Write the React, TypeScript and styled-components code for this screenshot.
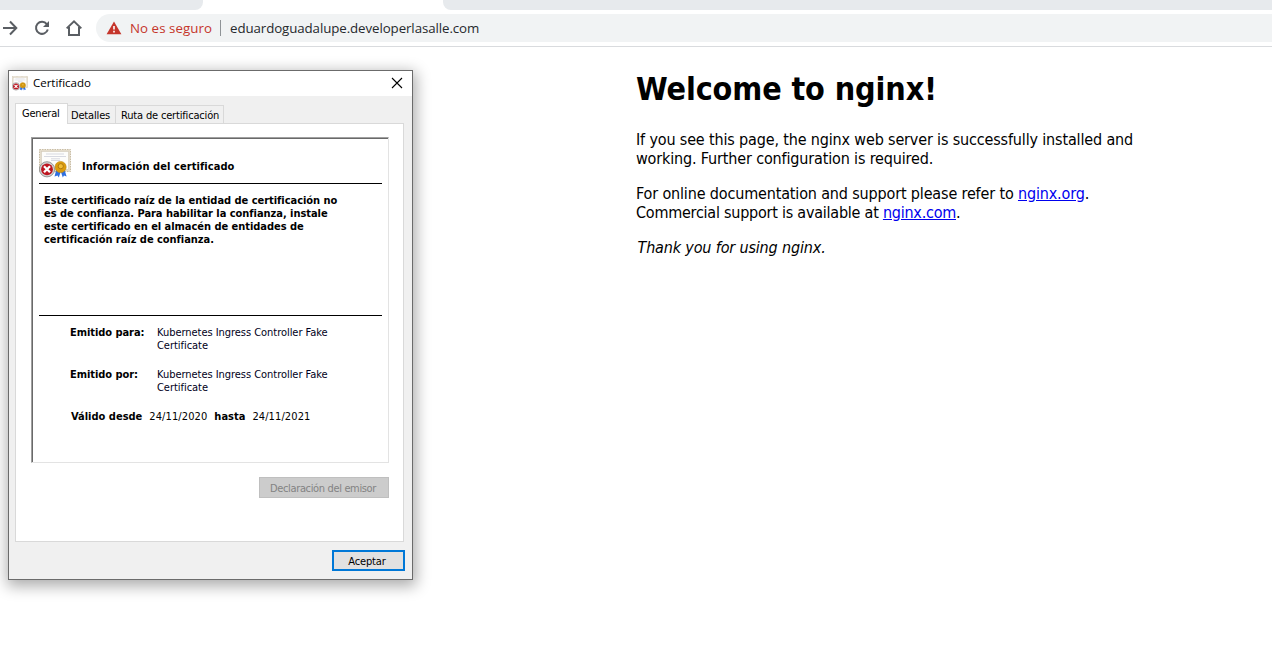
import React from "react";
import styled, { createGlobalStyle } from "styled-components";

const tahoma = `"DejaVu Sans Condensed", "DejaVu Sans", sans-serif`;
const segoe = `"Open Sans", "Noto Sans", sans-serif`;

const GlobalStyle = createGlobalStyle`
  * { box-sizing: border-box; }
  body { margin: 0; background: #fff; color: #000; font-family: ${tahoma}; overflow: hidden; }
`;

const Screen = styled.div`
  position: relative;
  width: 1272px;
  height: 650px;
  overflow: hidden;
  background: #fff;
`;

/* Browser chrome */
const TabStrip = styled.div`
  display: flex;
  justify-content: space-between;
  height: 10px;
`;
const BackgroundTab = styled.div<{ $width: number; $side: "left" | "right" }>`
  width: ${(p) => p.$width}px;
  background: #e7eaed;
  border-radius: ${(p) => (p.$side === "left" ? "0 0 8px 0" : "0 0 0 8px")};
`;
const Toolbar = styled.div`
  display: flex;
  align-items: center;
  height: 37px;
  padding-bottom: 1px;
  border-bottom: 1px solid #d9dbde;
`;
const NavIcons = styled.div`
  display: flex;
  width: 96px;
  height: 28px;
`;
const NavIcon = styled.svg`
  flex: none;
  width: 32px;
  height: 28px;
  fill: none;
  stroke: #5a5e63;
  stroke-width: 2;
  &:first-child { width: 26px; }
`;
const Omnibox = styled.div`
  display: flex;
  align-items: center;
  flex: 1;
  height: 28px;
  padding-left: 10px;
  border-radius: 14px 0 0 14px;
  background: #f1f3f4;
  font: 13.3px/28px ${segoe};
`;
const WarningIcon = styled.svg`
  width: 16px;
  height: 14px;
  margin-right: 8px;
`;
const Insecure = styled.span`
  width: 90px;
  color: #c5352b;
  letter-spacing: 0.05px;
  white-space: nowrap;
`;
const Divider = styled.span`
  width: 1px;
  height: 16px;
  margin-right: 9px;
  background: #8f9397;
`;
const Address = styled.span`
  color: #26292d;
  letter-spacing: -0.09px;
  white-space: nowrap;
`;

/* Web page */
const Page = styled.main`
  margin-left: 636px;
  width: 560px;
  padding-top: 23px;
  font-size: 16px;
  line-height: 19px;
  letter-spacing: -0.155px;
  white-space: nowrap;
`;
const Title = styled.h1`
  margin: 0 0 21px;
  font-size: 32px;
  line-height: 39px;
  letter-spacing: -0.12px;
`;
const Paragraph = styled.p`
  margin: 0 0 16px;
`;
const Tight = styled.span`
  letter-spacing: -0.235px;
`;
const Thanks = styled.em`
  margin-left: 1.5px;
`;
const Link = styled.a`
  color: #0000ee;
  text-decoration: underline;
`;

/* Certificate window */
const Dialog = styled.section`
  position: absolute;
  left: 8px;
  top: 70px;
  width: 405px;
  height: 510px;
  border: 1px solid #6b6b6b;
  background: #f0f0f0;
  box-shadow: 1px 4px 14px 2px rgba(0, 0, 0, 0.33);
  font-size: 11px;
  line-height: 13px;
`;
const TitleBar = styled.header`
  display: flex;
  align-items: center;
  height: 25px;
  padding: 0 9px 1px 3px;
  background: #fff;
  font: 11.5px/22px ${segoe};
`;
const TitleText = styled.span`
  flex: 1;
  margin-left: 5px;
  letter-spacing: -0.02px;
`;
const CloseIcon = styled.svg`
  width: 12px;
  height: 12px;
  stroke: #000;
  stroke-width: 1.1;
`;
const DialogBody = styled.div`
  padding: 7px 8px 0 6px;
`;
const Tabs = styled.div`
  display: flex;
  align-items: flex-end;
  height: 20px;
`;
const Tab = styled.div<{ $width: number; $track?: number; $active?: boolean }>`
  position: relative;
  width: ${(p) => p.$width}px;
  height: ${(p) => (p.$active ? 21 : 18)}px;
  margin-bottom: ${(p) => (p.$active ? -1 : 0)}px;
  padding-left: ${(p) => (p.$active ? 6 : p.$width > 80 ? 5 : 3)}px;
  border: 1px solid #d9d9d9;
  border-bottom: 0;
  border-left-width: ${(p) => (p.$active ? 1 : 0)}px;
  background: ${(p) => (p.$active ? "#fff" : "#f0f0f0")};
  line-height: 20px;
  letter-spacing: ${(p) => p.$track ?? 0}px;
  white-space: nowrap;
`;
const Panel = styled.div`
  display: flex;
  flex-direction: column;
  width: 389px;
  height: 419px;
  padding: 13px 14px 0 15px;
  border: 1px solid #d9d9d9;
  background: #fff;
`;
const Frame = styled.div`
  width: 358px;
  height: 326px;
  padding: 11px 6px 0;
  border: 1px solid;
  border-color: #a0a0a0 #e3e3e3 #e3e3e3 #a0a0a0;
  box-shadow: inset 1px 1px 0 #696969;
`;
const Heading = styled.div`
  display: flex;
  height: 35px;
  margin-left: 1px;
  border-bottom: 1px solid #000;
`;
const HeadingText = styled.b`
  margin: 11px 0 0 11px;
  letter-spacing: 0.07px;
`;
const Notice = styled.div`
  height: 132px;
  margin-left: 1px;
  padding: 10px 0 0 5px;
  border-bottom: 1px solid #000;
  font-weight: bold;
  letter-spacing: -0.035px;
  white-space: nowrap;
`;
const Details = styled.dl`
  display: grid;
  grid-template-columns: 87px 1fr;
  row-gap: 16px;
  margin: 10px 0 0 32px;
`;
const Label = styled.dt`
  font-weight: bold;
  letter-spacing: -0.06px;
`;
const Value = styled.dd`
  margin: 0;
  color: #000020;
  letter-spacing: -0.04px;
`;
const Validity = styled.div`
  display: flex;
  margin: 16px 0 0 33px;
  gap: 7px;
  white-space: nowrap;
`;
const Day = styled.span`
  letter-spacing: 0.1px;
`;
const Button = styled.button<{ $primary?: boolean }>`
  align-self: flex-end;
  flex: none;
  display: block;
  width: ${(p) => (p.$primary ? 73 : 130)}px;
  height: 21px;
  margin: ${(p) => (p.$primary ? "8px -1px 0 auto" : "14px 0 0")};
  padding: ${(p) => (p.$primary ? "1px 3px 0 0" : "1px 2px 0 0")};
  border: ${(p) => (p.$primary ? "2px solid #0078d7" : "1px solid #bfbfbf")};
  background: ${(p) => (p.$primary ? "#e1e1e1" : "#cccccc")};
  color: ${(p) => (p.$primary ? "#000" : "#838383")};
  font: 11px/17px ${tahoma};
  letter-spacing: ${(p) => (p.$primary ? -0.15 : -0.35)}px;
`;
const CertSvg = styled.svg`
  flex: none;
`;

function CertificateIcon({ width, height }: { width: number; height: number }) {
  return (
    <CertSvg width={width} height={height} viewBox="0 0 32 29">
      <rect x="0.5" y="0.5" width="31" height="22" fill="#e4dccb" stroke="#c9bda4" strokeDasharray="1.5 1" />
      <rect x="2.5" y="2.5" width="27" height="18" fill="#fdfdfb" stroke="#d3cab9" strokeWidth="0.6" />
      <path d="M7 5h18M5 7.5h22M12 9.8h9M12 11.5h9" stroke="#c6c9d6" strokeWidth="0.7" />
      <path d="M17.5 20l-2 7.5 3-1 1.3 2 2-6 2 6 1.2-2 2.6 1-2.4-8z" fill="#2f6fe0" />
      <circle cx="21.6" cy="18" r="5.6" fill="#dc9c0c" stroke="#c08a14" strokeWidth="0.6" />
      <circle cx="21.8" cy="17.2" r="2.6" fill="#f0bd35" stroke="#a8720b" strokeWidth="0.9" />
      <circle cx="8" cy="20.3" r="7.6" fill="#d2d2d2" stroke="#858585" strokeWidth="0.8" />
      <circle cx="8" cy="20.3" r="5.9" fill="#bd1620" />
      <path d="M5 17.3l6 6M11 17.3l-6 6" stroke="#fff" strokeWidth="2.3" />
    </CertSvg>
  );
}

export default function App() {
  return (
    <Screen>
      <GlobalStyle />
      <TabStrip>
        <BackgroundTab $width={203} $side="left" />
        <BackgroundTab $width={829} $side="right" />
      </TabStrip>
      <Toolbar>
        <NavIcons>
          <NavIcon viewBox="0 0 26 28">
            <path d="M3 14h13M10 7.5l6.3 6.5-6.3 6.5" />
          </NavIcon>
          <NavIcon viewBox="0 0 32 28">
            <path d="M20.8 10.2a6 6 0 1 0 1 5.3" />
            <path d="M23 7v6h-6z" fill="#5a5e63" stroke="none" />
          </NavIcon>
          <NavIcon viewBox="0 0 32 28">
            <path d="M8.7 14.4L16 7.4l7.3 7M11 13v8h10v-8" />
          </NavIcon>
        </NavIcons>
        <Omnibox>
          <WarningIcon viewBox="0 0 16 14">
            <path d="M8 0.6L15.4 13.2H0.6z" fill="#c5352b" />
            <path d="M8 5v3.6M8 9.8v1.6" stroke="#fff" strokeWidth="1.6" />
          </WarningIcon>
          <Insecure>No es seguro</Insecure>
          <Divider />
          <Address>eduardoguadalupe.developerlasalle.com</Address>
        </Omnibox>
      </Toolbar>

      <Page>
        <Title>Welcome to nginx!</Title>
        <Paragraph>
          If you see this page, the nginx web server is successfully installed and
          <br />
          working. Further configuration is required.
        </Paragraph>
        <Paragraph>
          For online documentation and support please refer to <Link>nginx.org</Link>.
          <br />
          <Tight>
            Commercial support is available at <Link>nginx.com</Link>.
          </Tight>
        </Paragraph>
        <Paragraph>
          <Thanks>Thank you for using nginx.</Thanks>
        </Paragraph>
      </Page>

      <Dialog>
        <TitleBar>
          <CertificateIcon width={16} height={15} />
          <TitleText>Certificado</TitleText>
          <CloseIcon viewBox="0 0 12 12">
            <path d="M1 1l10 10M11 1L1 11" />
          </CloseIcon>
        </TitleBar>
        <DialogBody>
          <Tabs>
            <Tab $width={53} $active $track={-0.2}>General</Tab>
            <Tab $width={48} $track={-0.17}>Detalles</Tab>
            <Tab $width={108} $track={-0.17}>Ruta de certificación</Tab>
          </Tabs>
          <Panel>
            <Frame>
              <Heading>
                <CertificateIcon width={32} height={29} />
                <HeadingText>Información del certificado</HeadingText>
              </Heading>
              <Notice>
                Este certificado raíz de la entidad de certificación no
                <br />
                es de confianza. Para habilitar la confianza, instale
                <br />
                este certificado en el almacén de entidades de
                <br />
                certificación raíz de confianza.
              </Notice>
              <Details>
                <Label>Emitido para:</Label>
                <Value>
                  Kubernetes Ingress Controller Fake
                  <br />
                  Certificate
                </Value>
                <Label>Emitido por:</Label>
                <Value>
                  Kubernetes Ingress Controller Fake
                  <br />
                  Certificate
                </Value>
              </Details>
              <Validity>
                <b>Válido desde</b>
                <Day>24/11/2020</Day>
                <b>hasta</b>
                <Day>24/11/2021</Day>
              </Validity>
            </Frame>
            <Button disabled>Declaración del emisor</Button>
          </Panel>
          <Button $primary>Aceptar</Button>
        </DialogBody>
      </Dialog>
    </Screen>
  );
}
